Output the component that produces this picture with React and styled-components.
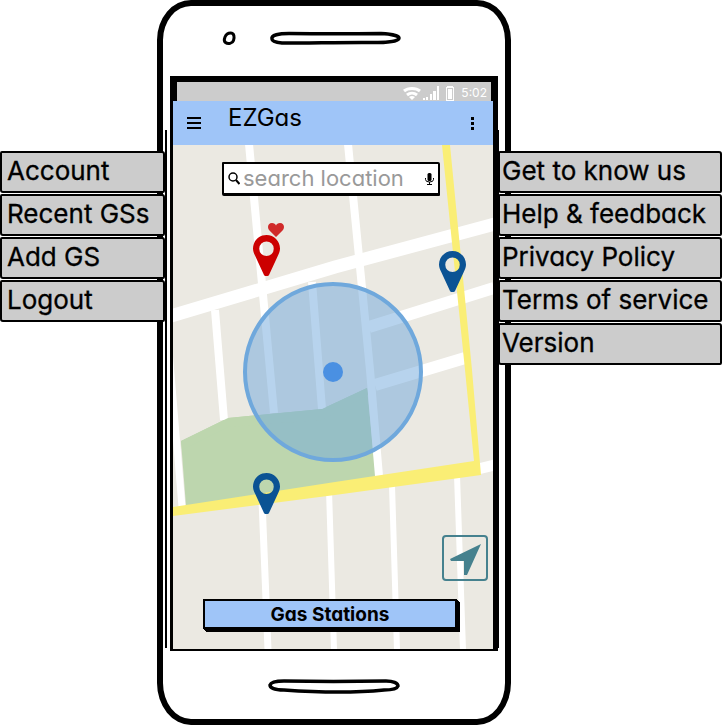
import React from "react";
import styled, { createGlobalStyle } from "styled-components";

const GlobalStyle = createGlobalStyle`
  * { box-sizing: border-box; }
  body {
    margin: 0;
    background: #fff;
    color: #000;
    font-family: Inter, "Liberation Sans", sans-serif;
    font-feature-settings: "cv11";
  }
  button, input { font: inherit; color: inherit; font-feature-settings: inherit; }
`;

const Page = styled.main`
  display: flex;
  align-items: flex-start;
`;

const MenuNav = styled.nav`
  position: relative;
  z-index: 1;
  flex: ${(p) => (p.$side === "left" ? 165 : 224)} 1 0;
  min-width: 0;
  margin-top: 151px;
  margin-left: ${(p) => (p.$side === "right" ? "-13px" : "0")};
  margin-right: ${(p) => (p.$side === "left" ? "-8px" : "0")};
`;

const MenuList = styled.ul`
  display: grid;
  gap: 1px;
  margin: 0;
  padding: 0;
  list-style: none;
`;

const MenuLink = styled.a`
  display: block;
  height: 42px;
  padding-left: ${(p) => (p.$side === "left" ? 5 : 2)}px;
  border: 2px solid #000;
  border-radius: 2px 3px 2px 3px;
  background: #ccc;
  color: #000;
  font-size: 26px;
  line-height: 36px;
  text-decoration: none;
  white-space: nowrap;
  -webkit-text-stroke: 0.3px #000;
`;

const Phone = styled.section`
  flex: none;
  width: 354px;
  border: 6px solid #000;
  border-radius: 34px 34px 34px 34px / 40px 40px 42px 42px;
  background: #fff;
`;

const PhoneTop = styled.div`
  display: flex;
  align-items: center;
  gap: 32px;
  height: 70px;
  padding: 0 0 6px 58px;

  svg { display: block; }
`;

const PhoneBottom = styled.div`
  display: flex;
  justify-content: center;
  height: 68px;
  padding-top: 27px;
`;

const Housing = styled.div`
  position: relative;
  margin: 0 7px;

  &::before {
    content: "";
    position: absolute;
    left: -5px;
    top: 54px;
    bottom: 3px;
    border-left: 2px solid #000;
  }
  &::after {
    content: "";
    position: absolute;
    right: -1px;
    top: 54px;
    bottom: 3px;
    border-left: 1px solid #000;
  }
`;

const Screen = styled.div`
  border: solid #000;
  border-width: 6px 5px 2px 3px;
  background: #000;
`;

const StatusBar = styled.div`
  display: flex;
  align-items: center;
  justify-content: flex-end;
  gap: 2px;
  height: 19px;
  margin: 0 2px 0 4px;
  padding: 3px 4px 0 0;
  background: #ccc;
  color: #fff;
  font-size: 12px;
  line-height: 14px;

  time { padding-left: 1px; }
`;

const AppBar = styled.header`
  display: flex;
  align-items: center;
  height: 44px;
  padding: 0 14px;
  background: #9fc5f8;
`;

const IconButton = styled.button`
  display: grid;
  place-items: center;
  flex: none;
  padding: 0;
  border: 0;
  background: none;
  cursor: pointer;
`;

const Title = styled.h1`
  flex: 1;
  margin: 0;
  padding: 0 0 10px 27px;
  font-size: 24px;
  font-weight: 400;
  line-height: 26px;
`;

const MapArea = styled.div`
  position: relative;
  display: flex;
  flex-direction: column;
  height: 504px;
  padding: 17px 33px 17px 30px;
  background: #ebe9e2;
`;

const MapDrawing = styled.svg`
  position: absolute;
  inset: 0;
  width: 100%;
  height: 100%;
`;

const Pin = styled.button`
  position: absolute;
  left: ${(p) => p.$x}px;
  top: ${(p) => p.$y}px;
  padding: 0;
  border: 0;
  background: none;
  color: ${(p) => p.$color};
  cursor: pointer;

  svg { display: block; }
`;

const Favourite = styled.svg`
  position: absolute;
  left: 15px;
  top: -12px;
`;

const SearchBox = styled.label`
  position: relative;
  display: flex;
  align-items: center;
  gap: 3px;
  height: 34px;
  margin: 0 20px 0 19px;
  padding: 0 4px;
  border: 2px solid #000;
  border-bottom-width: 3px;
  border-radius: 1px 2px;
  background: #fff;

  svg { flex: none; }
`;

const SearchInput = styled.input`
  flex: 1;
  min-width: 0;
  height: 28px;
  padding: 0 0 2px;
  border: 0;
  outline: 0;
  background: none;
  font-size: 22px;
  line-height: 26px;

  &::placeholder { color: #999; opacity: 1; }
`;

const LocateButton = styled.button`
  position: relative;
  align-self: flex-end;
  width: 46px;
  height: 46px;
  margin: auto -28px 18px 0;
  padding: 0;
  border: 2px solid #45818e;
  border-radius: 4px;
  background: none;
  color: #45818e;
  cursor: pointer;

  svg { display: block; }
`;

const StationsButton = styled.button`
  position: relative;
  height: 30px;
  margin: 0 3px 3px 0;
  padding: 2px 0 0;
  border: 2px solid #000;
  background: #9fc5f8;
  box-shadow: 1px 1px #000, 2px 2px #000, 3px 3px #000;
  font-size: 19px;
  font-weight: 700;
  line-height: 24px;
  cursor: pointer;
`;

const leftItems = ["Account", "Recent GSs", "Add GS", "Logout"];
const rightItems = ["Get to know us", "Help & feedback", "Privacy Policy", "Terms of service", "Version"];
const pins = [
  { x: 80, y: 90, color: "#cc0000", label: "Favourite station", favourite: true },
  { x: 266, y: 106, color: "#0b5394", label: "Station east" },
  { x: 80, y: 328, color: "#0b5394", label: "Station south" },
];

function Menu({ side, label, items }) {
  return (
    <MenuNav $side={side} aria-label={label}>
      <MenuList>
        {items.map((item) => (
          <li key={item}>
            <MenuLink $side={side} href="#">{item}</MenuLink>
          </li>
        ))}
      </MenuList>
    </MenuNav>
  );
}

function StreetMap() {
  return (
    <MapDrawing viewBox="0 0 320 504" preserveAspectRatio="xMidYMid slice" aria-hidden="true">
      <polygon fill="#bdd6ae" points="8,296 55,273 149,264 194,243 203,333 13,361" />
      <g fill="none" stroke="#fff">
        <path strokeWidth="8" d="M76 -1 L101 268 M175 -1 L197 225 L206 331 M42 165 L51 275 M139 137 L149 264" />
        <path strokeWidth="7" d="M-4 205 L9 362 M89 355 L95 505" />
        <path strokeWidth="6" d="M156 345 L161 505 M219 340 L224 505 M284 330 L290 505" />
        <path strokeWidth="13" d="M-2 171 L162 122 L322 79" />
        <path strokeWidth="12" d="M196 182 L321 143 M202 240 L292 213" />
        <path strokeWidth="11" d="M305 324 L322 320" />
      </g>
      <polygon fill="#bdd6ae" points="8,296 55,273 149,264 194,243 195,250 149,275 55,282 9,305" />
      <polygon fill="#faee75" points="269,0 277,0 299,225 308,330 162,350 0,371 0,362 162,337 301,316 292,225" />
      <circle cx="160" cy="227" r="88" fill="#6fa8dc" fillOpacity="0.5" />
      <circle cx="160" cy="227" r="88" fill="none" stroke="#6fa8dc" strokeWidth="4" />
      <circle cx="160" cy="227" r="10" fill="#4a90e2" />
    </MapDrawing>
  );
}

export default function App() {
  return (
    <>
      <GlobalStyle />
      <Page>
        <Menu side="left" label="Account menu" items={leftItems} />
        <Phone>
          <PhoneTop aria-hidden="true">
            <svg width="16" height="16" viewBox="0 0 16 16" fill="none" stroke="#000" strokeWidth="3">
              <path d="M9.500 3C13.500 3 13.500 7.500 12.500 10.500S7 14.500 4.500 12.500 4 3 9.500 3Z" />
            </svg>
            <svg width="132" height="16" viewBox="0 0 132 16" fill="none" stroke="#000" strokeWidth="3.500">
              <path d="M3 9C2 5 10 3.500 20 3.500C50 4 80 4 112 3.500C123 4 130 6 130 8C130 11 119 12.500 109 12.500C80 12 45 13 13 13C7 12.500 3 11 3 9Z" />
            </svg>
          </PhoneTop>
          <Housing>
            <Screen>
              <StatusBar>
                <svg width="18" height="14" viewBox="0 0 18 14" fill="none" stroke="#fff" strokeWidth="3" aria-label="Wi-Fi">
                  <path d="M1 5C5 1.500 13 1.500 17 5M4 9C7 6.500 11 6.500 14 9" />
                  <path d="M6 11C8 9.500 10 9.500 12 11L9 14Z" fill="#fff" stroke="none" />
                </svg>
                <svg width="16" height="14" viewBox="0 0 16 14" fill="#fff" aria-label="Signal">
                  <path d="M0 12h2v2H0zM3 11h2v3H3zM7 8h2v6H7zM10 5h3v9h-3zM14 0h2v14h-2z" />
                </svg>
                <svg width="17" height="15" viewBox="0 0 17 15" fill="#fff" aria-label="Battery">
                  <path d="M6 0h6v1h1v14H5V1h1zM6 2v12h6V2z" fillRule="evenodd" />
                  <path d="M7 3h4v10H7z" />
                </svg>
                <time>5:02</time>
              </StatusBar>
              <AppBar>
                <IconButton aria-label="Menu">
                  <svg width="14" height="12" viewBox="0 0 14 12">
                    <path d="M0 0h14v2H0zM0 5h14v2H0zM0 10h14v2H0z" />
                  </svg>
                </IconButton>
                <Title>EZGas</Title>
                <IconButton aria-label="More options">
                  <svg width="13" height="13" viewBox="0 0 13 13">
                    <path d="M5 0h3v3H5zM5 5h3v3H5zM5 10h3v3H5z" />
                  </svg>
                </IconButton>
              </AppBar>
              <MapArea>
                <StreetMap />
                {pins.map((pin) => (
                  <Pin key={pin.label} $x={pin.x} $y={pin.y} $color={pin.color} aria-label={pin.label}>
                    <svg width="27" height="41" viewBox="0 0 27 41" fill="currentColor">
                      <path fillRule="evenodd" d="M13.500 0C6 0 0 6 0 13.500C0 16 .8 18 2 20.500L11 40Q11.500 41 12.500 41H14.500Q15.500 41 16 40L25 20.500C26.200 18 27 16 27 13.500C27 6 21 0 13.500 0ZM13.500 6.500A7.200 7.200 0 1 1 13.500 21A7.200 7.200 0 1 1 13.500 6.500Z" />
                    </svg>
                    {pin.favourite && (
                      <Favourite width="16" height="14" viewBox="0 0 16 14" fill="#d02a2a">
                        <path d="M8 14L1 7C-1 4.500 0 0 4 0C6 0 7.500 1 8 2.500C8.500 1 10 0 12 0C16 0 17 4.500 15 7Z" />
                      </Favourite>
                    )}
                  </Pin>
                ))}
                <SearchBox>
                  <svg width="12" height="13" viewBox="0 0 12 13" fill="none" stroke="#000" strokeWidth="1.500" aria-hidden="true">
                    <circle cx="5" cy="5" r="4" />
                    <path d="M8 8L11.500 12" strokeWidth="2" />
                  </svg>
                  <SearchInput type="text" aria-label="Search location" placeholder="search location" />
                  <svg width="9" height="12" viewBox="0 0 9 12" aria-hidden="true">
                    <rect x="2.500" width="4" height="8" rx="1.500" />
                    <path d="M.5 5V6.500Q.5 9 4.500 9T8.500 6.500V5M4.500 9V11.500M2 11.500H7" fill="none" stroke="#000" />
                  </svg>
                </SearchBox>
                <LocateButton aria-label="My location">
                  <svg width="42" height="42" viewBox="2 2 42 42" fill="currentColor">
                    <path d="M8 24L39 9L25 40H22V26H9Z" />
                  </svg>
                </LocateButton>
                <StationsButton>Gas Stations</StationsButton>
              </MapArea>
            </Screen>
          </Housing>
          <PhoneBottom aria-hidden="true">
            <svg width="132" height="16" viewBox="0 0 132 16" fill="none" stroke="#000" strokeWidth="3.500">
              <path d="M2 7C3 4 9 3 16 3C45 3.500 85 3.500 118 3C125 3 130 5 130 8C129 11 123 12 116 12C85 15 45 14 16 12C7 12 2 10 2 7Z" />
            </svg>
          </PhoneBottom>
        </Phone>
        <Menu side="right" label="Information menu" items={rightItems} />
      </Page>
    </>
  );
}
